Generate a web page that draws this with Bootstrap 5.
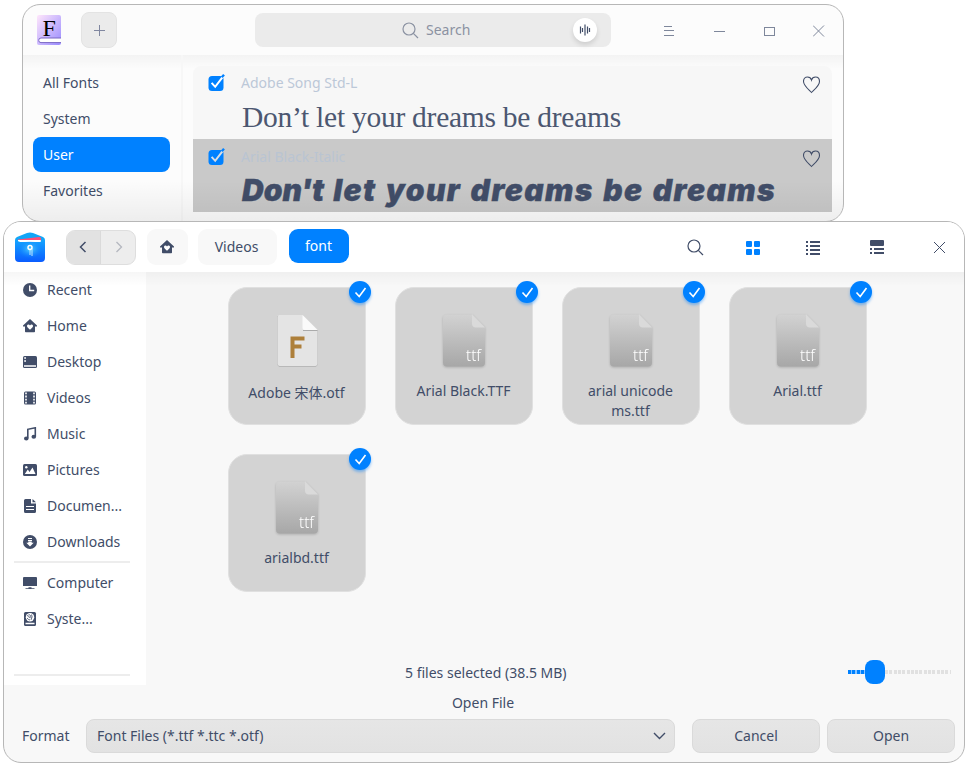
<!DOCTYPE html>
<html lang="en">
<head>
<meta charset="utf-8">
<meta name="viewport" content="width=device-width, initial-scale=1">
<title>Open File</title>
<link href="https://cdn.jsdelivr.net/npm/bootstrap@5.3.0/dist/css/bootstrap.min.css" rel="stylesheet">
<style>
body{width:967px;height:766px;overflow:hidden;background:#fff;color:#414d68;font:14px/20px "Noto Sans","Noto Sans CJK SC",sans-serif}
svg{display:block;flex:none}
.win{border:1px solid #b7b7b7;border-radius:18px;overflow:hidden}
.win-fonts{left:22px;top:4px;width:822px;height:218px;background:#fcfcfc}
.win-dialog{left:3px;top:221px;width:962px;height:542px;background:#f8f8f8}
.bar{height:50px}
.plus{width:36px;height:36px;margin-left:20px;background:#ebebeb;border:1px solid #e3e3e3;border-radius:8px}
.search{width:356px;height:34px;margin-left:138px;background:#ebebeb;border-radius:8px;color:#8b92a2}
.voice{width:24px;height:24px;right:14px;top:5px;background:#fff;box-shadow:0 3px 5px rgba(0,0,0,.12)}
.shade{background-image:linear-gradient(rgba(0,0,0,.035),rgba(0,0,0,0) 14px);background-repeat:no-repeat}
.cats{width:160px;border-right:2px solid #f7f7f7;padding:10px 11px 0 10px}
.cat{height:35px;margin-bottom:1px;padding-left:10px;border-radius:8px}
.cat.on,.crumb.on{background:#0081ff;color:#fff}
.fontrow{width:639px;height:73px;background:#f7f7f7;padding:7px 11px 0 15px}
.fontrow.sel{background:#c9c9c9;padding-top:8px}
.fontrow>.d-flex{height:20px}
.fname{color:#bcc8d8;line-height:20px}
.sel .fname{color:#b9c4d2}
.like{margin-top:3px}
.sample{line-height:36px;margin-left:34px;white-space:nowrap}
.garamond{font-family:"Liberation Serif",serif;font-size:29.5px;letter-spacing:-.26px;margin-top:6px;color:#4c5771}
.heavy{font-family:Inter,sans-serif;font-weight:900;font-style:italic;font-size:30px;margin-top:5px;letter-spacing:1.4px;word-spacing:2px;-webkit-text-stroke:.4px #414d68}
.heavy .tight{letter-spacing:0}
.fadeout{left:0;right:0;bottom:0;height:40px;background:linear-gradient(rgba(0,0,0,0),rgba(0,0,0,.06))}
.navpair{width:70px;height:35px;border:1px solid #dedede;border-radius:9px;overflow:hidden;background:#ededed}
.navpair>div:first-child{background:#e2e2e2;border-right:1px solid #dadada}
.navpair svg{margin-right:2px}
.crumb{height:36px;border-radius:9px;background:#f8f8f8}
.places{width:142px;height:413px;background-color:#fff}
.place{height:36px;padding-left:19px;gap:10px}
.rule{height:2px;width:116px;margin-left:10px;background:#ededed}
.tiles{padding:15px 0 0 82px;gap:29px;height:386px;align-content:flex-start}
.tile{width:138px;height:138px;border:1px solid #e0e0e0;border-radius:19px;background:#d3d3d3;padding-top:26px}
.label{margin:13px 1px 0 0}
.tick{width:22px;height:22px;right:-6px;top:-7px;background:#0081ff;box-shadow:0 2px 3px rgba(0,129,255,.45)}
.foot{height:78px}
.ctl{height:34px;background:linear-gradient(#e6e6e6,#e2e2e2);border:1px solid #dadada;border-radius:8px}
.track{height:4px;background:repeating-linear-gradient(90deg,#e1e1e1 0 3px,transparent 3px 4.3px)}
.track.fill{background:repeating-linear-gradient(90deg,#0081ff 0 3px,#8cc6ff 3px 4.3px)}
.knob{width:20px;height:24px;border-radius:8px;background:#0081ff}
</style>
<script src="https://cdn.jsdelivr.net/npm/bootstrap@5.3.0/dist/js/bootstrap.bundle.min.js"></script>
</head>
<body class="position-relative">
<svg width="0" height="0" class="position-absolute">
<defs>
<linearGradient id="gBook" x1="0" y1="0" x2="1" y2="1"><stop offset="0" stop-color="#ffe6fb"/><stop offset="1" stop-color="#9a8cff"/></linearGradient>
<linearGradient id="gDoc" x1="0" y1="0" x2="0" y2="1"><stop offset="0" stop-color="#d2d2d2"/><stop offset="1" stop-color="#a7a7a7"/></linearGradient>
<linearGradient id="gCab" x1="0" y1="0" x2="0" y2="1"><stop offset="0" stop-color="#13a4ff"/><stop offset="1" stop-color="#0a5cff"/></linearGradient>
<radialGradient id="gGlow" cx=".5" cy=".45" r=".5"><stop offset="0" stop-color="#4fd0ff"/><stop offset="1" stop-color="#148cff" stop-opacity="0"/></radialGradient>
<symbol id="heart" viewBox="0 0 18 18"><path d="M8.500 16.500C6 13.800.5 9.600.5 5.400.5 2.500 2.400 1 4.500 1c2 0 3.500 1.200 4 3 .5-1.800 2-3 4-3 2.100 0 4 1.500 4 4.400 0 4.200-5.500 8.400-8 11.100z" fill="none" stroke="#414d68" stroke-width="1.100"/></symbol>
<symbol id="check" viewBox="0 0 18 18"><rect x="0.500" y="2" width="15" height="15" rx="3.500" fill="#0081ff"/><path d="M3.600 8.800l3.600 4L15 2.600" fill="none" stroke="currentColor" stroke-width="2"/><path d="M13.800 3.200L16 .8" stroke="#0081ff" stroke-width="2.400"/></symbol>
<symbol id="home" viewBox="0 0 14 14"><path d="M7 0l7 6.600v1h-2V12.400a.8.8 0 0 1-.8.8H2.800a.8.8 0 0 1-.8-.8V7.600H0v-1z" fill="#414d68"/><path d="M7 10.800C5.500 9.400 4 8.500 4 7.100c0-1.700 2.200-2 3-.6.8-1.400 3-1.100 3 .6 0 1.400-1.500 2.300-3 3.700z" fill="#fff"/></symbol>
<symbol id="ttf" viewBox="0 0 44 54"><path d="M5 0.500H30.500L43 13V48.500a4 4 0 0 1-4 4H5a4 4 0 0 1-4-4V4.500a4 4 0 0 1 4-4z" fill="url(#gDoc)"/><path d="M30 .5v9a4 4 0 0 0 4 4h9z" fill="#dadada"/></symbol>
<symbol id="tk" viewBox="0 0 22 22"><path d="M6.500 11.500l3.700 4L16.500 7" fill="none" stroke="#fff" stroke-width="1.600"/></symbol>
<symbol id="lens" viewBox="0 0 17 17"><circle cx="7" cy="7" r="6" fill="none" stroke="currentColor" stroke-width="1.200"/><path d="M11.300 11.300l4.700 4.700" stroke="currentColor" stroke-width="1.200"/></symbol>
</defs>
</svg>

<!-- Font manager window -->
<main class="win win-fonts position-absolute">
  <div class="bar d-flex align-items-center">
    <svg width="24" height="30" style="margin-left:14px" viewBox="0 0 24 30"><rect width="24" height="30" rx="2" fill="url(#gBook)"/><path d="M24 23H4a2.200 2.200 0 0 0 0 4.600h20z" fill="#fff"/><path d="M24 23H4a2.200 2.200 0 0 0 0 4.600h20" fill="none" stroke="#7a67c4"/><text x="12.200" y="21" font-family="Liberation Serif,serif" font-size="24" text-anchor="middle" fill="#000">F</text></svg>
    <div class="plus d-flex align-items-center justify-content-center"><svg width="12" height="12"><path d="M6.500 1v11M1 6.500h11" stroke="#8087a0"/></svg></div>
    <div class="search d-flex align-items-center position-relative">
      <svg width="17" height="17" style="margin-left:147px;margin-right:7px"><use href="#lens"/></svg><span>Search</span>
      <div class="voice rounded-circle position-absolute d-flex align-items-center justify-content-center"><svg width="12" height="12"><path d="M1.500 2.500v7M3.500 4v4M6 .5v11M8.500 2.500v7M10.500 4v4" stroke="#414d68" stroke-width="1.200"/></svg></div>
    </div>
    <svg width="12" height="12" style="margin-left:53px;margin-top:1px" fill="none" stroke="#7e879b"><path d="M0 1.500h8M0 5.500h10M0 10.500h10"/></svg>
    <svg width="11" height="12" style="margin-left:38px;margin-top:1px" stroke="#7e879b"><path d="M0 6.500h11"/></svg>
    <svg width="12" height="12" style="margin-left:39px;margin-top:1px" fill="none" stroke="#7e879b"><rect x=".5" y="2.500" width="10" height="8"/></svg>
    <svg width="12" height="12" style="margin-left:37px;margin-top:1px" stroke="#7e879b"><path d="M0 .5l11 11M11 .5l-11 11"/></svg>
  </div>
  <div class="d-flex shade" style="height:166px">
    <nav class="cats flex-shrink-0 d-flex flex-column">
      <div class="cat flex-shrink-0 d-flex align-items-center">All Fonts</div>
      <div class="cat flex-shrink-0 d-flex align-items-center">System</div>
      <div class="cat on flex-shrink-0 d-flex align-items-center">User</div>
      <div class="cat flex-shrink-0 d-flex align-items-center">Favorites</div>
      <div class="cat flex-shrink-0 d-flex align-items-center">Active</div>
    </nav>
    <section style="margin:11px 0 0 10px">
      <div class="fontrow rounded-top-3">
        <div class="d-flex align-items-center"><svg class="text-white" width="18" height="18"><use href="#check"/></svg><span class="fname flex-grow-1" style="margin-left:15px">Adobe Song Std-L</span><svg class="like" width="18" height="18"><use href="#heart"/></svg></div>
        <div class="sample garamond">Don’t let your dreams be dreams</div>
      </div>
      <div class="fontrow sel">
        <div class="d-flex align-items-center"><svg style="color:#d9dde3" width="18" height="18"><use href="#check"/></svg><span class="fname flex-grow-1" style="margin-left:15px">Arial Black-Italic</span><svg class="like" width="18" height="18"><use href="#heart"/></svg></div>
        <div class="sample heavy"><span class="tight">Don't</span> let your dreams be dreams</div>
      </div>
    </section>
  </div>
  <div class="fadeout position-absolute"></div>
</main>

<!-- File chooser dialog -->
<section class="win win-dialog position-absolute">
  <header class="bar bg-white d-flex align-items-center">
    <svg width="30" height="30" viewBox="0 0 30 30" style="margin-left:11px"><path d="M0 8Q0 6 2 5L12 1q3-1.200 6 0l10 4q2 1 2 3v8H0z" fill="#12a6f7"/><path d="M3 7.500L24 5q2-.2 2 1.500V10H3z" fill="#ff4f78"/><path d="M3 8h22q1 0 1 1v2H3z" fill="#fff"/><path d="M0 8h2.500q.5 2 3 2h19q2.500 0 3-2H30V26q0 4-4 4H4q-4 0-4-4z" fill="url(#gCab)"/><ellipse cx="15" cy="18" rx="12" ry="9" fill="url(#gGlow)"/><circle cx="15" cy="15.500" r="2" fill="none" stroke="#fff" stroke-width="1.500"/><path d="M15 18v5M17 17v7" stroke="#bfe6ff"/></svg>
    <div class="navpair d-flex" style="margin-left:21px"><div class="w-50 d-flex align-items-center justify-content-center"><svg width="8" height="12" fill="none" stroke="#414d68" stroke-width="1.500"><path d="M6.500 1l-5 5 5 5"/></svg></div><div class="w-50 d-flex align-items-center justify-content-center"><svg style="margin-right:0;margin-left:1px" width="8" height="12" fill="none" stroke="#b4b7bf" stroke-width="1.300"><path d="M1.500 1l5 5-5 5"/></svg></div></div>
    <div class="crumb d-flex align-items-center justify-content-center" style="width:41px;margin-left:11px;padding-right:1px"><svg width="14" height="14"><use href="#home"/></svg></div>
    <div class="crumb d-flex align-items-center justify-content-center" style="width:79px;margin-left:10px;padding-right:2px">Videos</div>
    <div class="crumb on d-flex align-items-center justify-content-center" style="width:60px;height:34px;margin:0 0 3px 12px;padding-right:1px">font</div>
    <svg width="17" height="17" style="margin-left:338px"><use href="#lens"/></svg>
    <svg width="14" height="14" style="margin-left:42px;margin-top:2px" fill="#0081ff"><rect width="6" height="6" rx="1"/><rect x="8" width="6" height="6" rx="1"/><rect y="8" width="6" height="6" rx="1"/><rect x="8" y="8" width="6" height="6" rx="1"/></svg>
    <svg width="14" height="14" style="margin-left:46px;margin-top:2px" fill="#414d68"><path d="M0 0h2v2H0zM4 0h10v2H4zM0 4h2v2H0zM4 4h10v2H4zM0 8h2v2H0zM4 8h10v2H4zM0 12h2v2H0zM4 12h10v2H4z"/></svg>
    <svg width="14" height="14" style="margin-left:50px" fill="#414d68"><rect width="14" height="6" rx="1"/><path d="M0 8h2v2H0zM4 8h10v2H4zM0 12h2v2H0zM4 12h10v2H4z"/></svg>
    <svg width="12" height="12" style="margin-left:50px;margin-top:1px" stroke="#414d68"><path d="M0 0l11 11M11 0L0 11"/></svg>
  </header>
  <div class="d-flex">
    <nav class="places shade flex-shrink-0">
      <div class="place d-flex align-items-center"><svg width="14" height="14"><circle cx="7" cy="7" r="7" fill="#414d68"/><path d="M6.700 2.500v5h4.500" fill="none" stroke="#fff" stroke-width="1.300"/></svg>Recent</div>
      <div class="place d-flex align-items-center"><svg width="14" height="14"><use href="#home"/></svg>Home</div>
      <div class="place d-flex align-items-center"><svg width="14" height="12"><rect width="14" height="12" rx="1.500" fill="#414d68"/><path d="M1 10h12M1.200 2h1.800M1.200 5h1.800" stroke="#fff" stroke-width="1.500"/></svg>Desktop</div>
      <div class="place d-flex align-items-center"><svg width="14" height="14"><rect x="1" y=".5" width="12" height="13" rx="1.500" fill="#414d68"/><path d="M3 1.500v12M11 1.500v12" stroke="#fff" stroke-width="1.600" stroke-dasharray="1.800 1.300"/></svg>Videos</div>
      <div class="place d-flex align-items-center"><svg width="14" height="14"><path d="M4.800 11V2.300L12.300.800V9.500" fill="none" stroke="#414d68" stroke-width="1.600"/><ellipse cx="3.300" cy="11.500" rx="2.300" ry="2" fill="#414d68"/><ellipse cx="10.800" cy="9.800" rx="2.300" ry="2" fill="#414d68"/></svg>Music</div>
      <div class="place d-flex align-items-center"><svg width="14" height="12"><rect width="14" height="12" rx="1.500" fill="#414d68"/><path d="M1.800 10l3-4.500L6.500 8l3-4.500L12.500 10z" fill="#fff"/><circle cx="3.300" cy="3.300" r="1.200" fill="#fff"/></svg>Pictures</div>
      <div class="place d-flex align-items-center"><svg width="14" height="14"><path d="M2.500 0H8v4.500h5V12.500A1.500 1.500 0 0 1 11.500 14h-9A1.500 1.500 0 0 1 1 12.500v-11A1.500 1.500 0 0 1 2.500 0zM9.500 0L13 3.300H9.500z" fill="#414d68"/><path d="M3 7.500h8M3 10.500h8" stroke="#fff"/></svg>Documen...</div>
      <div class="place d-flex align-items-center"><svg width="14" height="14"><circle cx="7" cy="7" r="7" fill="#414d68"/><path d="M5 3.500h4M5 5.500h4" stroke="#fff"/><path d="M5.300 6.500h3.400v1.300h2L7 11.500 3.300 7.800h2z" fill="#fff"/></svg>Downloads</div>
      <div class="rule" style="margin-top:1px;margin-bottom:2px"></div>
      <div class="place d-flex align-items-center"><svg width="14" height="12"><path d="M1 0h12q1 0 1 1v8H0V1q0-1 1-1zM5.500 10.200h3v1h3v.8h-9v-.8h3z" fill="#414d68"/></svg>Computer</div>
      <div class="place d-flex align-items-center"><svg width="14" height="14"><rect x="1" width="12" height="14" rx="1.500" fill="#414d68"/><circle cx="7" cy="5.300" r="4.200" fill="#fff"/><path d="M4 3.500q2.500.2 2.500 2.500M5.500 2.200q3 .8 2.500 4M8.500 2.500q1.500 2-.5 5.500M4 6q1.200 1.800 3 2" fill="none" stroke="#414d68" stroke-width=".8"/><path d="M2.500 11.500h9" stroke="#fff" stroke-width="1.300"/></svg>Syste...</div>
      <div class="rule" style="margin-top:37px"></div>
    </nav>
    <div class="flex-grow-1 shade">
      <div class="tiles d-flex flex-wrap">
        <div class="tile position-relative text-center"><svg class="mx-auto" width="46" height="56"><path d="M4.500 1.500H28L43.500 16v34.500q0 2-2 2h-36q-2 0-2-2v-48z" fill="#9d9d9d"/><path d="M5 1h23.500L43.500 15.500V50q0 2-2 2h-36q-2 0-2-2V3q0-2 1.500-2z" fill="#e4e4e4"/><path d="M29 16.500h14.500" stroke="#aaa"/><path d="M28.500 1l15 15H30.500q-2 0-2-2z" fill="#fafafa"/><path d="M16.500 22.500h14v4h-10v4h7v4h-7v9.500h-4z" fill="#ad7f3a"/></svg><div class="label">Adobe 宋体.otf</div><div class="tick position-absolute rounded-circle"><svg width="22" height="22"><use href="#tk"/></svg></div></div>
        <div class="tile position-relative text-center"><svg class="mx-auto" width="44" height="54" style="filter:drop-shadow(0 1px 1px rgba(0,0,0,.18))"><use href="#ttf"/><text x="39" y="47" text-anchor="end" font-size="16" fill="#fff" font-family="Noto Sans" font-weight="300" textLength="15" lengthAdjust="spacingAndGlyphs">ttf</text></svg><div class="label">Arial Black.TTF</div><div class="tick position-absolute rounded-circle"><svg width="22" height="22"><use href="#tk"/></svg></div></div>
        <div class="tile position-relative text-center"><svg class="mx-auto" width="44" height="54" style="filter:drop-shadow(0 1px 1px rgba(0,0,0,.18))"><use href="#ttf"/><text x="39" y="47" text-anchor="end" font-size="16" fill="#fff" font-family="Noto Sans" font-weight="300" textLength="15" lengthAdjust="spacingAndGlyphs">ttf</text></svg><div class="label">arial unicode<br>ms.ttf</div><div class="tick position-absolute rounded-circle"><svg width="22" height="22"><use href="#tk"/></svg></div></div>
        <div class="tile position-relative text-center"><svg class="mx-auto" width="44" height="54" style="filter:drop-shadow(0 1px 1px rgba(0,0,0,.18))"><use href="#ttf"/><text x="39" y="47" text-anchor="end" font-size="16" fill="#fff" font-family="Noto Sans" font-weight="300" textLength="15" lengthAdjust="spacingAndGlyphs">ttf</text></svg><div class="label">Arial.ttf</div><div class="tick position-absolute rounded-circle"><svg width="22" height="22"><use href="#tk"/></svg></div></div>
        <div class="tile position-relative text-center"><svg class="mx-auto" width="44" height="54" style="filter:drop-shadow(0 1px 1px rgba(0,0,0,.18))"><use href="#ttf"/><text x="39" y="47" text-anchor="end" font-size="16" fill="#fff" font-family="Noto Sans" font-weight="300" textLength="15" lengthAdjust="spacingAndGlyphs">ttf</text></svg><div class="label">arialbd.ttf</div><div class="tick position-absolute rounded-circle"><svg width="22" height="22"><use href="#tk"/></svg></div></div>
      </div>
      <div class="d-flex align-items-center" style="height:28px">
        <div style="margin-left:259px;width:162px;white-space:nowrap;margin-top:2px">5 files selected (38.5 MB)</div>
        <div class="track fill" style="width:17px;margin-left:281px"></div><div class="knob"></div><div class="track" style="width:66px"></div>
      </div>
    </div>
  </div>
  <footer class="foot">
    <div class="text-center" style="padding:7px 2px 0 0">Open File</div>
    <div class="d-flex align-items-center" style="margin-top:6px">
      <div style="width:64px;margin-left:18px;line-height:34px">Format</div>
      <div class="ctl d-flex align-items-center justify-content-between" style="width:589px;padding:0 8px 0 10px"><span>Font Files (*.ttf *.ttc *.otf)</span><svg width="13" height="8" fill="none" stroke="#414d68" stroke-width="1.400"><path d="M1 1l5.500 5.500L12 1"/></svg></div>
      <button class="ctl p-0" style="width:128px;margin-left:17px;color:#414d68">Cancel</button>
      <button class="ctl p-0" style="width:128px;margin-left:7px;color:#414d68">Open</button>
    </div>
  </footer>
</section>
</body>
</html>
